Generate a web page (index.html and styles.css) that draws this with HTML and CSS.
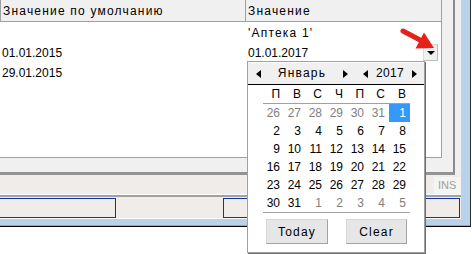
FILE: index.html
```html
<!DOCTYPE html>
<html lang="ru">
<head>
<meta charset="utf-8">
<title>Значение</title>
<link rel="stylesheet" href="styles.css">
</head>
<body>
<div class="window">
  <div class="frame">
    <div class="content">
      <div class="upper">
        <div class="sunken">
          <div class="grid">
            <div class="hdr">
              <div class="hcell c1 t">Значение по умолчанию</div>
              <div class="hcell c2 t">Значение</div>
            </div>
            <div class="row">
              <div class="cell c1"></div>
              <div class="cell c2 t">'Аптека 1'</div>
            </div>
            <div class="row">
              <div class="cell c1">01.01.2015</div>
              <div class="cell c2 editor">
                <span>01.01.2017</span>
                <span class="dd"><span class="tri-down"></span></span>
              </div>
            </div>
            <div class="row">
              <div class="cell c1">29.01.2015</div>
              <div class="cell c2"></div>
            </div>
          </div>
        </div>
      </div>
      <div class="ins-panel">
        <div class="ins">INS</div>
      </div>
      <div class="gap-line"></div>
      <div class="status">
        <div class="sbox b1"></div>
        <div class="sbox b2"></div>
      </div>
    </div>
  </div>
  <div class="cyan"></div>
</div>

<svg class="red-arrow" width="40" height="26" viewBox="0 0 40 26">
  <line x1="5" y1="5" x2="22" y2="14" stroke="#e8201a" stroke-width="5" stroke-linecap="round"/>
  <polygon points="36,22 17.5,22.5 26,6.5" fill="#e8201a"/>
</svg>

<div class="popup">
  <div class="cal-head">
    <span class="tri-left first"></span>
    <span class="month t">Январь</span>
    <span class="tri-right"></span>
    <span class="tri-left second"></span>
    <span class="year">2017</span>
    <span class="tri-right"></span>
  </div>
  <div class="cal-body">
    <div class="dow">
      <span>П</span><span>В</span><span>С</span><span>Ч</span><span>П</span><span>С</span><span>В</span>
    </div>
    <div class="days">
      <span class="other">26</span><span class="other">27</span><span class="other">28</span><span class="other">29</span><span class="other">30</span><span class="other">31</span><span class="sel">1</span>
      <span>2</span><span>3</span><span>4</span><span>5</span><span>6</span><span>7</span><span>8</span>
      <span>9</span><span>10</span><span>11</span><span>12</span><span>13</span><span>14</span><span>15</span>
      <span>16</span><span>17</span><span>18</span><span>19</span><span>20</span><span>21</span><span>22</span>
      <span>23</span><span>24</span><span>25</span><span>26</span><span>27</span><span>28</span><span>29</span>
      <span>30</span><span>31</span><span class="other">1</span><span class="other">2</span><span class="other">3</span><span class="other">4</span><span class="other">5</span>
    </div>
  </div>
  <div class="cal-actions">
    <button class="btn today t">Today</button>
    <button class="btn clear t">Clear</button>
  </div>
</div>
</body>
</html>
```

FILE: styles.css
```css
* { box-sizing: border-box; }

body {
  margin: 0;
  width: 472px;
  height: 254px;
  overflow: hidden;
  position: relative;
  background: #fff;
  font-family: "Liberation Sans", Arial, sans-serif;
  font-size: 12px;
  color: #000;
}

.t { letter-spacing: 1.2px; }

.window {
  width: 471px;
  border-right: 1px solid #2b2b2b;
  border-bottom: 1px solid #000;
}

.frame {
  display: flex;
  border-right: 9px solid #b9d1ea;
  border-bottom: 6px solid #b9d1ea;
}

.cyan { height: 1px; background: #4cc4e4; }

.content {
  width: 461px;
  display: flex;
  flex-direction: column;
}

.upper {
  height: 175px;
  background: #f0f0f0;
}

.sunken {
  width: 455px;
  height: 175px;
  background: #f0f0f0;
  border-right: 2px solid #8a8a8a;
  border-bottom: 3px solid #939393;
}

.grid {
  width: 442px;
  height: 158px;
  background: #fff;
  border-right: 1px solid #a0a0a0;
  border-bottom: 1px solid #a0a0a0;
}

.hdr {
  display: flex;
  height: 22px;
  background: #f0f0f0;
  border-bottom: 1px solid #a0a0a0;
}

.hcell {
  height: 21px;
  padding-top: 2px;
  line-height: 19px;
  white-space: nowrap;
}

.hcell.c1 {
  width: 246px;
  border-left: 1px solid #a0a0a0;
  border-right: 1px solid #a0a0a0;
  padding-left: 2px;
}

.hcell.c2 {
  flex: 1;
  padding-left: 2px;
}

.row {
  display: flex;
  height: 20px;
}

.cell {
  padding-top: 1px;
  line-height: 20px;
  white-space: nowrap;
}

.cell.c1 { width: 246px; padding-left: 2px; }
.cell.c2 { flex: 1; padding-left: 2px; }

.editor { display: flex; }

.dd {
  width: 15px;
  height: 17px;
  margin: 1px 3px 0 auto;
  background: #f0f0f0;
  border: 1px solid #dadada;
  border-right-color: #bcbcbc;
  border-bottom-color: #bcbcbc;
  display: flex;
  align-items: center;
  justify-content: center;
}

.tri-down {
  width: 0;
  height: 0;
  border-left: 4px solid transparent;
  border-right: 4px solid transparent;
  border-top: 4px solid #000;
}

.ins-panel {
  height: 20px;
  background: #efecea;
  border-bottom: 1px solid #fff;
  display: flex;
  justify-content: flex-end;
}

.ins {
  width: 27px;
  margin: 2px 0 0;
  background: #f4f4f4;
  color: #a0a0a0;
  font-size: 11px;
  line-height: 17px;
  padding-left: 4px;
  white-space: nowrap;
  overflow: hidden;
}

.gap-line {
  height: 2px;
  background: #a0a0a0;
}

.status {
  height: 22px;
  background: #efecea;
  border-bottom: 1px solid #fff;
  display: flex;
  padding-top: 1px;
}

.sbox {
  height: 20px;
  border: 1px solid #12349a;
}

.b1 { width: 117px; margin-left: -1px; }
.b2 { width: 237px; margin-left: 107px; }

/* red arrow overlay */
.red-arrow {
  position: absolute;
  left: 398px;
  top: 26px;
}

/* calendar popup */
.popup {
  position: absolute;
  left: 247px;
  top: 61px;
  width: 178px;
  background: #fff;
  border: 1px solid #a0a0a0;
  box-shadow: 1px 1px 0 #6d6d6d;
  padding-top: 1px;
}

.cal-head {
  height: 22px;
  background: #f0f0f0;
  border-bottom: 1px solid #000;
  display: flex;
  align-items: center;
}

.tri-left, .tri-right {
  width: 0;
  height: 0;
  border-top: 4.5px solid transparent;
  border-bottom: 4.5px solid transparent;
  flex: none;
}

.tri-left { border-right: 5px solid #000; }
.tri-right { border-left: 5px solid #000; }

.tri-left.first { margin-left: 8px; }

.month {
  width: 82px;
  text-align: center;
  line-height: 21px;
}

.tri-left.second { margin-left: 15px; }

.year {
  width: 44px;
  text-align: center;
  line-height: 21px;
  letter-spacing: 0.3px;
}

.cal-body {
  margin-left: 15px;
  width: 147px;
}

.dow, .days {
  display: grid;
  grid-template-columns: repeat(7, 21px);
  border-bottom: 1px solid #a0a0a0;
}

.dow { grid-auto-rows: 18px; }
.days { grid-auto-rows: 18px; }

.dow span, .days span {
  text-align: right;
  padding-right: 4px;
  line-height: 18px;
}

.days .other { color: #808080; }

.days .sel {
  background: #3399ff;
  color: #fff;
}

.cal-actions {
  display: flex;
  padding: 6px 0 8px 18px;
  gap: 18px;
}

.btn {
  height: 25px;
  margin: 0;
  padding: 0;
  font-family: "Liberation Sans", Arial, sans-serif;
  font-size: 12px;
  color: #000;
  background: #e6e6e6;
  border: 1px solid #d6d6d6;
  border-right-color: #a3a3a3;
  border-bottom-color: #a3a3a3;
}

.today { width: 62px; }
.clear { width: 61px; }
```
